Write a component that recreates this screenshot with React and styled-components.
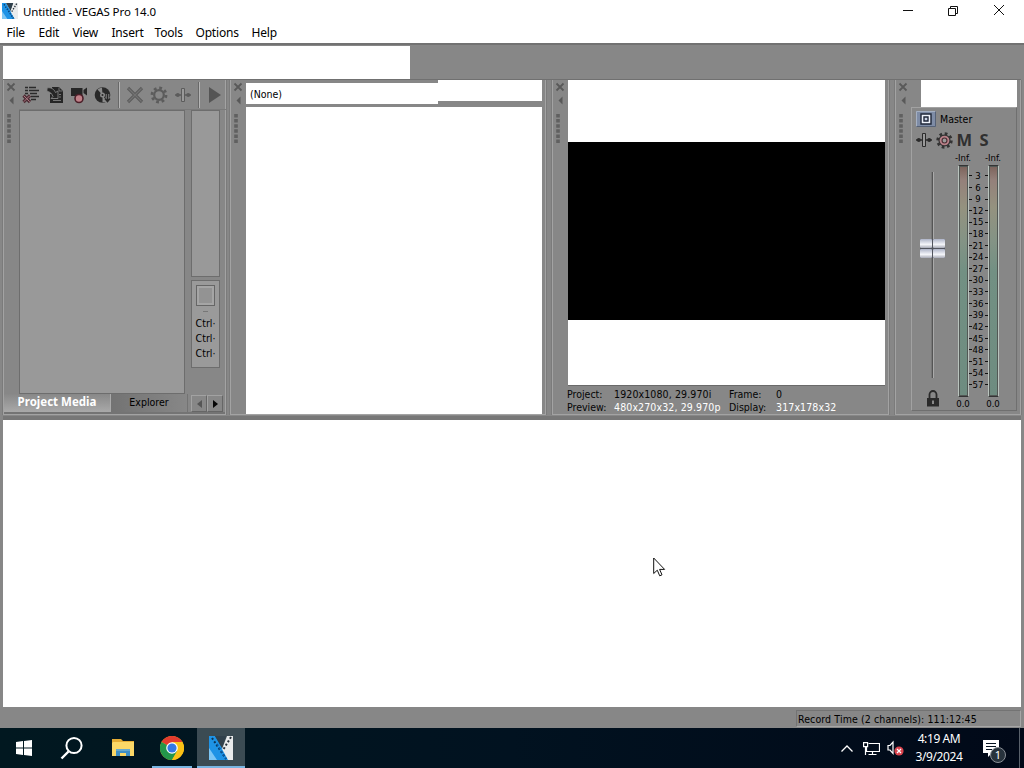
import React from "react";
import styled, { createGlobalStyle } from "styled-components";

const MENU = [
  ["File", 32],
  ["Edit", 34],
  ["View", 39],
  ["Insert", 43],
  ["Tools", 41],
  ["Options", 56],
  ["Help", 40],
];

const SCALE = [3, 6, 9, 12, 15, 18, 21, 24, 27, 30, 33, 36, 39, 42, 45, 48, 51, 54, 57];

const VegasLogo = ({ size }) => (
  <svg width={size} height={size} viewBox="0 0 24 24">
    <path d="M0 0h6l14 24H0z" fill="#1e93e6" />
    <path d="M0 12l8 12H0z" fill="#7cc6f5" />
    <path d="M6 0h11l-4 12z" fill="#31414c" />
    <path d="M18 0h6v24h-5l-6-11z" fill="#e9ebec" />
    <path d="M3 2l14 21" stroke="#0b3558" strokeWidth="2" strokeDasharray="2 2" />
    <path d="M22 1l-8 13" stroke="#27313a" strokeWidth="2" strokeDasharray="2 2" />
    <path d="M8 8l9 15" stroke="#0a5aa5" strokeWidth="1.6" strokeDasharray="2 2" />
  </svg>
);

const MediaIcon = () => (
  <svg width="18" height="18" viewBox="0 0 18 18">
    <path d="M3 1.500h3M7 1.500h7M3 4.500h3M7 4.500h10M3 7.500h3M8 7.500h7M9 10.500h8M9 13.500h5" stroke="#2b2b2b" strokeWidth="1.3" />
    <path d="M1.500 9.500l6.500 6.500M8 9.500l-6.500 6.500" stroke="#4e2c34" strokeWidth="3.200" />
    <path d="M1.800 9.800l5.900 5.900M7.700 9.800l-5.900 5.900" stroke="#a97882" strokeWidth="1" />
  </svg>
);

const ImportIcon = () => (
  <svg width="18" height="18" viewBox="0 0 18 18">
    <path d="M6 1h7l4 4v12H4V8h2z" fill="#262626" />
    <path d="M13 1.500V5h3.500" fill="none" stroke="#858585" strokeWidth=".8" />
    <path d="M1 2c4-1 7 1 8.500 4.500L12 5v7.500H5l2-2C5.500 7 3.500 5.500 1 5.500z" fill="#262626" stroke="#858585" strokeWidth=".9" />
    <path d="M13 8.500h2M13 11h2M7 14.500h8" stroke="#777" strokeWidth="1" />
  </svg>
);

const CaptureIcon = () => (
  <svg width="18" height="18" viewBox="0 0 18 18">
    <path d="M1 2h11.500v8H1zM13.500 4l3.500-2.500v8l-3.500-2.500z" fill="#262626" />
    <circle cx="9" cy="12.500" r="4" fill="#c08088" stroke="#4c1f29" strokeWidth="1.600" />
  </svg>
);

const DiscIcon = () => (
  <svg width="18" height="18" viewBox="0 0 18 18">
    <circle cx="8.500" cy="9" r="7.800" fill="#292929" />
    <path d="M8.500 9L3.500 3.500A7 7 0 0 1 8 1.800zM8.500 9l4 6a7 7 0 0 1-4 1.200z" fill="#8a8a8a" />
    <circle cx="8.500" cy="9" r="2.500" fill="#8a8a8a" />
    <circle cx="8.500" cy="9" r="1" fill="#292929" />
    <path d="M13.500 8v7M10.500 12.500l3 3.500 3-3.500" stroke="#8a8a8a" strokeWidth="3.500" fill="none" />
    <path d="M13.500 8v7M11 12.500l2.500 3 2.500-3" stroke="#292929" strokeWidth="1.600" fill="none" />
  </svg>
);

const DeleteIcon = () => (
  <svg width="18" height="18" viewBox="0 0 18 18">
    <path d="M2 2l14 14M16 2L2 16" stroke="#5c5c5c" strokeWidth="3.200" />
    <path d="M2.500 2.500l13 13M15.500 2.500l-13 13" stroke="#737373" strokeWidth="1.200" />
  </svg>
);

const GearIcon = ({ color = "#5c5c5c", inner = "#888", size = 18 }) => (
  <svg width={size} height={size} viewBox="0 0 18 18">
    <circle cx="9" cy="9" r="7" fill="none" stroke={color} strokeWidth="2.800" strokeDasharray="2.750 2.750" />
    <circle cx="9" cy="9" r="4.800" fill={inner} stroke={color} strokeWidth="2.200" />
  </svg>
);

const MasterFxIcon = () => (
  <svg width="17" height="17" viewBox="0 0 18 18">
    <circle cx="9" cy="9" r="7.200" fill="none" stroke="#333" strokeWidth="3" strokeDasharray="2.830 2.830" />
    <circle cx="9" cy="9" r="5.800" fill="#b98088" stroke="#333" strokeWidth="1.300" />
    <circle cx="9" cy="9" r="2.600" fill="#999" stroke="#4a2e34" strokeWidth="1.200" />
  </svg>
);

const TrackFxIcon = ({ color = "#5c5c5c" }) => (
  <svg width="16" height="16" viewBox="0 0 16 16">
    <path d="M0 8h6M10 8h6" stroke={color} strokeWidth="1.500" />
    <circle cx="2.800" cy="8" r="2" fill={color} />
    <circle cx="13.200" cy="8" r="2" fill={color} />
    <path d="M6.500 1.500h3v13h-3z" fill="#999" stroke={color} />
  </svg>
);

const BusIcon = () => (
  <svg width="20" height="16" viewBox="0 0 20 16">
    <path d="M0 0h20v16H0z" fill="#7e8ca6" />
    <path d="M.500 15.500V.500h19" fill="none" stroke="#a5b0c2" />
    <path d="M19.500.500v15H.500" fill="none" stroke="#566175" />
    <path d="M5 3h10v10H5z" fill="#eef2fa" stroke="#1e2637" strokeWidth="1.400" />
    <path d="M8 6h4v4H8z" fill="#cbd4e6" stroke="#1e2637" strokeWidth="1.400" />
  </svg>
);

const LockIcon = () => (
  <svg width="12" height="17" viewBox="0 0 12 17">
    <path d="M2.500 8V4.500a3.500 3.500 0 0 1 7 0V8" fill="none" stroke="#2a2a2a" strokeWidth="1.800" />
    <path d="M0 8h12v8.500H0z" fill="#2a2a2a" />
    <path d="M6 10.500v3.500" stroke="#aaa" strokeWidth="1.500" />
  </svg>
);

const DockHandle = () => (
  <Handle>
    <svg width="14" height="66" viewBox="0 0 14 66">
      <path d="M3.500 3.500l7 7M10.500 3.500l-7 7" stroke="#595959" strokeWidth="1.800" />
      <path d="M9.500 16.500v8l-4-4z" fill="#595959" />
      <path d="M5 34v30" stroke="#606060" strokeWidth="3.600" strokeDasharray="3.500 1.600" />
    </svg>
  </Handle>
);

const Arrow = ({ left, color }) => (
  <svg width="5" height="8" viewBox="0 0 5 8">
    <path d={left ? "M5 0v8L0 4z" : "M0 0v8l5-4z"} fill={color} />
  </svg>
);

function App() {
  return (
    <>
      <GlobalStyle />
      <Screen>
        <TitleBar>
          <VegasLogo size={16} />
          <Title>Untitled - VEGAS Pro 14.0</Title>
          <WindowButtons>
            <svg width="102" height="12" viewBox="0 0 102 12" fill="none" stroke="#111">
              <path d="M0 6.500h10" />
              <path d="M45.500 4.500h7v7h-7zM47.500 4.500v-2h7v7h-2" />
              <path d="M91 1l10 10M101 1L91 11" />
            </svg>
          </WindowButtons>
        </TitleBar>
        <MenuBar>
          {MENU.map(([label, width]) => (
            <MenuItem key={label} $width={width}>{label}</MenuItem>
          ))}
        </MenuBar>
        <Workspace>
          <MainToolbar />
          <Docks>
            <MediaDock />
            <TrimmerDock />
            <PreviewDock />
            <MixerDock />
          </Docks>
          <Timeline>
            <Cursor width="13" height="21" viewBox="0 0 13 21">
              <path d="M.700 1v15.500l3.600-3.300 2.400 5.600 2.300-1-2.400-5.400h5z" fill="#fff" stroke="#111" />
            </Cursor>
          </Timeline>
          <StatusBar>
            <RecordTime>Record Time (2 channels): 111:12:45</RecordTime>
          </StatusBar>
        </Workspace>
        <Taskbar />
      </Screen>
    </>
  );
}

function MediaDock() {
  return (
    <Dock $width={223} $gap={4}>
      <DockRow>
        <DockHandle />
        <MediaMain>
          <MediaTools>
            <Tool $width={24}><MediaIcon /></Tool>
            <Tool $width={24}><ImportIcon /></Tool>
            <Tool $width={24}><CaptureIcon /></Tool>
            <Tool $width={24}><DiscIcon /></Tool>
            <Separator />
            <Tool $width={24}><DeleteIcon /></Tool>
            <Tool $width={24}><GearIcon /></Tool>
            <Tool $width={24}><TrackFxIcon /></Tool>
            <Separator />
            <Tool $width={24}>
              <svg width="12" height="16" viewBox="0 0 12 16"><path d="M0 0v16l12-8z" fill="#555" /></svg>
            </Tool>
          </MediaTools>
          <MediaLists>
            <BinTree />
            <MediaSide>
              <MediaList />
              <Shortcuts>
                <Thumb />
                <Dash />
                <Key>Ctrl·</Key>
                <Key>Ctrl·</Key>
                <Key>Ctrl·</Key>
              </Shortcuts>
            </MediaSide>
          </MediaLists>
        </MediaMain>
      </DockRow>
      <Tabs>
        <Tab $width={107} $active>Project Media</Tab>
        <Tab $width={77}>Explorer</Tab>
        <TabArrows>
          <TabArrow><Arrow left color="#555" /></TabArrow>
          <TabArrow><Arrow color="#050505" /></TabArrow>
        </TabArrows>
      </Tabs>
    </Dock>
  );
}

function TrimmerDock() {
  return (
    <Dock $width={316} $gap={6}>
      <DockRow>
        <DockHandle />
        <Trimmer>
          <TrimmerTop>
            <TrimmerSelect>(None)</TrimmerSelect>
            <TrimmerTools />
          </TrimmerTop>
          <TrimmerBody />
        </Trimmer>
      </DockRow>
    </Dock>
  );
}

function PreviewDock() {
  return (
    <Dock $width={337} $gap={6}>
      <DockRow>
        <DockHandle />
        <Preview>
          <PreviewArea><Video /></PreviewArea>
          <PreviewInfo>
            <Info>Project:</Info><Info $spacing={0.12}>1920x1080, 29.970i</Info>
            <Info>Frame:</Info><Info>0</Info>
            <Info>Preview:</Info><Info $light $spacing={0.12}>480x270x32, 29.970p</Info>
            <Info>Display:</Info><Info $light $spacing={0.12}>317x178x32</Info>
          </PreviewInfo>
        </Preview>
      </DockRow>
    </Dock>
  );
}

function MixerDock() {
  return (
    <Dock $width={126} $gap={0}>
      <DockRow>
        <DockHandle />
        <Mixer>
          <MixerTools />
          <Strip>
            <StripHead><BusIcon /><span>Master</span></StripHead>
            <StripButtons>
              <TrackFxIcon color="#2b2b2b" />
              <MasterFxIcon />
              <Letter>M</Letter>
              <Letter>S</Letter>
            </StripButtons>
            <StripBody>
              <FaderColumn>
                <Fader><FaderThumb><i /><i /><i /><i /></FaderThumb></Fader>
                <LockIcon />
              </FaderColumn>
              <Meter><Peak>-Inf.</Peak><MeterBar /><Peak>0.0</Peak></Meter>
              <Scale>
                {SCALE.map((n) => (
                  <Mark key={n}><b />{n}<b /></Mark>
                ))}
              </Scale>
              <Meter><Peak>-Inf.</Peak><MeterBar /><Peak>0.0</Peak></Meter>
            </StripBody>
          </Strip>
        </Mixer>
      </DockRow>
    </Dock>
  );
}

function Taskbar() {
  return (
    <Bar>
      <Task $width={48}>
        <svg width="16" height="16" viewBox="0 0 16 16" fill="#fff">
          <path d="M0 2l7-1v6.500H0zM8 .900L16 0v7.500H8zM0 8.500h7V15l-7-1zM8 8.500h8V16l-8-.900z" />
        </svg>
      </Task>
      <Task $width={48}>
        <svg width="24" height="24" viewBox="0 0 24 24" fill="none" stroke="#fff" strokeWidth="2">
          <circle cx="14" cy="9.500" r="7.600" /><path d="M8.500 15.500L1.500 22.500" strokeWidth="2.400" />
        </svg>
      </Task>
      <Task $width={53}>
        <svg width="22" height="20" viewBox="0 0 22 20">
          <path d="M0 1h9l2 2h11v15H0z" fill="#e5ad35" />
          <path d="M1 4h21v14H0V5z" fill="#fbd867" />
          <path d="M4 18v-7h14v7h-4v-3H8v3z" fill="#3f8fc5" />
          <path d="M4 11h14v2H4z" fill="#67a9cd" />
        </svg>
      </Task>
      <Task $width={46} $line={40}>
        <svg width="24" height="24" viewBox="0 0 24 24">
          <circle cx="12" cy="12" r="12" fill="#fbc116" />
          <path d="M12 12L1.600 6A12 12 0 0 1 22.400 6z" fill="#e33b2e" />
          <path d="M1.600 6A12 12 0 0 0 12 24l5.200-9z" fill="#23964a" />
          <path d="M22.400 6H12v6l5.200 3L12 24A12 12 0 0 0 22.400 6z" fill="#fbc116" />
          <circle cx="12" cy="12" r="5.800" fill="#fff" />
          <circle cx="12" cy="12" r="4.600" fill="#3478e5" />
        </svg>
      </Task>
      <Gap />
      <Task $width={48} $line={48} $active><VegasLogo size={24} /></Task>
      <Tray>
        <svg width="12" height="7" viewBox="0 0 12 7" fill="none" stroke="#fff" strokeWidth="1.300">
          <path d="M.500 6.500L6 1l5.500 5.500" />
        </svg>
        <svg width="17" height="15" viewBox="0 0 17 15" fill="none" stroke="#fff" strokeWidth="1.200">
          <path d="M5.500 2.500h11v8h-13V6M9.500 10.500v3M5.500 13.500h8" />
          <path d="M.600 1.600h4v4h-4zM2.500 5.500V14" />
        </svg>
        <svg width="17" height="16" viewBox="0 0 17 16">
          <path d="M1 5.500h2L6 2v11.500L3 10H1z" fill="none" stroke="#fff" strokeWidth="1.200" />
          <circle cx="12" cy="11" r="4.600" fill="#d9434d" />
          <path d="M10 9l4 4M14 9l-4 4" stroke="#fff" strokeWidth="1.200" />
        </svg>
      </Tray>
      <Clock><span>4:19 AM</span><span>3/9/2024</span></Clock>
      <Notifications>
        <svg width="16" height="17" viewBox="0 0 16 17">
          <path d="M0 0h16v13H9l-4 4v-4H0z" fill="#fff" />
          <path d="M3 3.500h10M3 6.500h10M3 9.500h6" stroke="#061321" />
        </svg>
        <Badge>1</Badge>
      </Notifications>
      <ShowDesktop />
    </Bar>
  );
}

const GlobalStyle = createGlobalStyle`
  * { box-sizing: border-box; }
  body { margin: 0; overflow: hidden; }
  svg { display: block; flex: none; }
`;

const Screen = styled.div`
  width: 1024px;
  height: 768px;
  display: flex;
  flex-direction: column;
  background: #fff;
  color: #000;
  font-family: "Noto Sans", "Open Sans", sans-serif;
  font-size: 12px;
  white-space: nowrap;
  overflow: hidden;
`;

const TitleBar = styled.div`
  height: 22px;
  display: flex;
  align-items: center;
  padding: 0 19px 0 2px;
`;

const Title = styled.div`
  margin-left: 5px;
  font-size: 11.5px;
  letter-spacing: -0.1px;
`;

const WindowButtons = styled.div`
  margin: -2px 0 0 auto;
`;

const MenuBar = styled.div`
  height: 21px;
  display: flex;
  line-height: 21px;
  letter-spacing: -0.2px;
`;

const MenuItem = styled.div`
  width: ${(p) => p.$width}px;
  padding-left: 6.5px;
`;

const Workspace = styled.div`
  flex: 1;
  display: flex;
  flex-direction: column;
  background: #878787;
  border-top: 2px solid #727272;
  padding: 1px 3px 0;
  font-family: "DejaVu Sans Condensed", "DejaVu Sans", sans-serif;
  font-stretch: condensed;
  font-size: 10.5px;
`;

const MainToolbar = styled.div`
  width: 407px;
  height: 33px;
  background: #fff;
`;

const Docks = styled.div`
  height: 337px;
  display: flex;
  border-top: 1px solid #707070;
`;

const Dock = styled.div`
  width: ${(p) => p.$width}px;
  height: 335px;
  margin-right: ${(p) => p.$gap}px;
  flex: none;
  display: flex;
  flex-direction: column;
  border: 1px solid #a3a3a3;
  border-top: 0;
  box-shadow: 1px 0 #7b7b7b, -1px 0 #7b7b7b;
`;

const DockRow = styled.div`
  flex: 1;
  min-height: 0;
  display: flex;
`;

const Handle = styled.div`
  width: 15px;
  flex: none;
`;

const MediaMain = styled.div`
  flex: 1;
`;

const MediaTools = styled.div`
  height: 30px;
  display: flex;
  align-items: center;
  border-bottom: 1px solid #7a7a7a;
`;

const Tool = styled.div`
  width: ${(p) => p.$width}px;
  display: flex;
  justify-content: center;
`;

const Separator = styled.div`
  width: 2px;
  height: 26px;
  margin: 0 3px;
  border-left: 1px solid #686868;
  border-right: 1px solid #b5b5b5;
`;

const MediaLists = styled.div`
  height: 284px;
  display: flex;
  gap: 6px;
`;

const BinTree = styled.div`
  width: 166px;
  background: #999;
  border: 1px solid #6d6d6d;
`;

const MediaSide = styled.div`
  width: 29px;
`;

const MediaList = styled.div`
  height: 167px;
  background: #999;
  border: 1px solid #6d6d6d;
`;

const Shortcuts = styled.div`
  height: 88px;
  margin-top: 3px;
  display: flex;
  flex-direction: column;
  align-items: center;
  background: #9a9a9a;
  border: 1px solid #6d6d6d;
  overflow: hidden;
`;

const Thumb = styled.div`
  width: 19px;
  height: 21px;
  margin-top: 4px;
  background: #939393;
  border: 1px solid #666;
  box-shadow: inset 0 0 0 2px #a5a5a5;
`;

const Dash = styled.div`
  width: 5px;
  height: 1px;
  margin: 5px 0 4px;
  background: #777;
`;

const Key = styled.div`
  height: 15px;
  line-height: 15px;
`;

const Tabs = styled.div`
  height: 20px;
  display: flex;
  border-bottom: 2px solid #747474;
`;

const Tab = styled.div`
  width: ${(p) => p.$width}px;
  height: 18px;
  line-height: ${(p) => (p.$active ? 16 : 17)}px;
  text-align: center;
  font-family: ${(p) => (p.$active ? '"Noto Sans", sans-serif' : "inherit")};
  font-size: ${(p) => (p.$active ? 11.5 : 10.5)}px;
  font-weight: ${(p) => (p.$active ? "bold" : "normal")};
  color: ${(p) => (p.$active ? "#fff" : "#000")};
  background: ${(p) => (p.$active ? "linear-gradient(#888, #a9a9a9)" : "linear-gradient(90deg, #737373, #878787)")};
  border-right: 1px solid ${(p) => (p.$active ? "#aaa" : "transparent")};
`;

const TabArrows = styled.div`
  display: flex;
  margin: 1px 0 0 3px;
`;

const TabArrow = styled.div`
  width: 16px;
  height: 17px;
  display: flex;
  align-items: center;
  justify-content: center;
  border: 1px solid #a2a2a2;
  border-right-color: #666;
  border-bottom-color: #666;
`;

const Trimmer = styled.div`
  width: 296px;
  display: flex;
  flex-direction: column;
`;

const TrimmerTop = styled.div`
  height: 27px;
  display: flex;
`;

const TrimmerSelect = styled.div`
  width: 192px;
  height: 21px;
  margin-top: 3px;
  padding-left: 4px;
  line-height: 22px;
  background: #fff;
`;

const TrimmerTools = styled.div`
  flex: 1;
  height: 21px;
  background: #fff;
`;

const TrimmerBody = styled.div`
  flex: 1;
  background: #fff;
`;

const Preview = styled.div`
  width: 317px;
`;

const PreviewArea = styled.div`
  height: 306px;
  padding-top: 62px;
  background: #fff;
  border-bottom: 1px solid #6a6a6a;
`;

const Video = styled.div`
  height: 178px;
  background: #000;
`;

const PreviewInfo = styled.div`
  display: grid;
  grid-template-columns: 47px 115px 47px 80px;
  grid-auto-rows: 13px;
  margin: 2px 0 0 -1px;
  line-height: 13px;
`;

const Info = styled.span`
  color: ${(p) => (p.$light ? "#fff" : "#050505")};
  letter-spacing: ${(p) => p.$spacing || 0}px;
`;

const Mixer = styled.div`
  width: 106px;
`;

const MixerTools = styled.div`
  width: 96px;
  height: 27px;
  margin-left: 10px;
  background: #fff;
`;

const Strip = styled.div`
  height: 304px;
  border: 1px solid #6f6f6f;
  border-top-color: #a2a2a2;
  border-left-color: #a2a2a2;
`;

const StripHead = styled.div`
  height: 22px;
  padding: 0 0 0 4px;
  display: flex;
  align-items: center;
  gap: 4px;
`;

const StripButtons = styled.div`
  height: 20px;
  padding-left: 4px;
  display: flex;
  align-items: center;
  gap: 3.700px;
`;

const Letter = styled.b`
  width: 16px;
  display: flex;
  justify-content: center;
  font-family: "Noto Sans", sans-serif;
  font-stretch: normal;
  font-size: 16.5px;
  line-height: 20px;
  color: #303030;
`;

const StripBody = styled.div`
  height: 260px;
  display: flex;
  padding: 1px 0 0 8px;
`;

const FaderColumn = styled.div`
  width: 25px;
  margin-right: 9px;
  display: flex;
  flex-direction: column;
  align-items: center;
  padding-top: 21px;
`;

const Fader = styled.div`
  width: 3px;
  height: 206px;
  margin-bottom: 12px;
  padding-top: 67px;
  display: flex;
  justify-content: center;
  border-right: 1px solid #aaa;
  background: linear-gradient(90deg, #777 50%, #555 50%);
`;

const FaderThumb = styled.div`
  width: 25px;
  height: 19px;
  flex: none;
  display: grid;
  grid-template-columns: 12px 12px;
  grid-template-rows: 9px 9px;
  gap: 1px;
  background: #52555e;

  i {
    background: linear-gradient(#aeb4c8, #f5f6fa 60%, #a7aab6);
    border-radius: 1px;
  }
`;

const Meter = styled.div`
  width: 18px;
  display: flex;
  flex-direction: column;
  align-items: center;
`;

const MeterBar = styled.div`
  width: 11px;
  height: 232px;
  flex: none;
  background: linear-gradient(#7c625a, #94807a 6%, #94927f 18%, #849385 32%, #729083 46%, #6e8c80);
  border: 1px solid #b9c3bd;
  border-top-color: #343434;
  border-bottom-color: #343434;
  outline: 1px solid #525855;
  outline-offset: -2px;
`;

const Peak = styled.div`
  height: 14px;
  line-height: 14px;
  flex: none;
  font-size: 9.5px;
`;

const Scale = styled.div`
  width: 12px;
  padding-top: 19px;
  display: flex;
  flex-direction: column;
  align-items: center;
  font-size: 9.5px;
`;

const Mark = styled.div`
  width: 19px;
  height: 11.62px;
  line-height: 11.62px;
  display: flex;
  align-items: center;
  justify-content: space-between;
  flex: none;

  b {
    width: 3px;
    height: 1px;
    background: #111;
  }
`;

const Timeline = styled.div`
  position: relative;
  height: 291px;
  background: #fff;
  border-top: 4px solid #777;
`;

const Cursor = styled.svg`
  position: absolute;
  left: 650px;
  top: 137px;
`;

const StatusBar = styled.div`
  height: 21px;
  display: flex;
  justify-content: flex-end;
  padding: 3px 0 0;
`;

const RecordTime = styled.div`
  width: 225px;
  height: 17px;
  padding-left: 1px;
  line-height: 16px;
  letter-spacing: 0.11px;
  border: 1px solid #737373;
  border-bottom-color: #a6a6a6;
  border-right-color: #a6a6a6;
`;

const Bar = styled.div`
  height: 40px;
  display: flex;
  background: linear-gradient(90deg, #011820, #011220 50%, #010918);
  color: #fff;
`;

const Task = styled.div`
  width: ${(p) => p.$width}px;
  height: 40px;
  display: flex;
  align-items: center;
  justify-content: center;
  background: ${(p) => (p.$active ? "#3b4b53" : "transparent")};
  background-image: ${(p) => (p.$line ? "linear-gradient(#78b5e2, #78b5e2)" : "none")};
  background-size: ${(p) => p.$line || 0}px 2px;
  background-position: center bottom;
  background-repeat: no-repeat;
`;

const Gap = styled.div`
  width: 2px;
`;

const Tray = styled.div`
  width: 73px;
  margin-left: 595px;
  padding-left: 1px;
  display: flex;
  align-items: center;
  gap: 10px;

  svg + svg + svg { margin-left: -3px; }
`;

const Clock = styled.div`
  width: 52px;
  display: flex;
  flex-direction: column;
  align-items: center;
  padding-top: 2px;
  line-height: 18px;
  letter-spacing: -0.4px;
`;

const Notifications = styled.div`
  position: relative;
  margin: 12px 0 0 18px;
  width: 37px;
`;

const Badge = styled.div`
  position: absolute;
  left: 7px;
  top: 7px;
  width: 16px;
  height: 16px;
  border: 1px solid #8a8f96;
  border-radius: 50%;
  background: #27323c;
  line-height: 14px;
  text-align: center;
  font-size: 11px;
`;

const ShowDesktop = styled.div`
  width: 1px;
  height: 40px;
  margin-left: -1px;
  background: #59616b;
`;

export default App;
